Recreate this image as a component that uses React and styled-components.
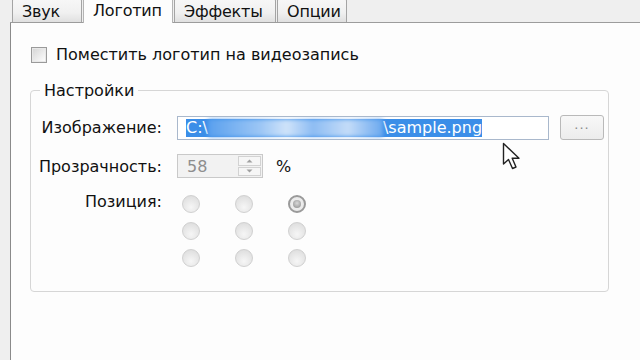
import React from "react";
import styled, { createGlobalStyle, css } from "styled-components";

const GlobalStyle = createGlobalStyle`
  html, body { margin: 0; padding: 0; }
  body {
    background: #efefef;
    font-family: "DejaVu Sans", "Liberation Sans", sans-serif;
    font-size: 16px;
    color: #111111;
  }
`;

const Window = styled.div`
  position: relative;
  width: 640px;
  height: 360px;
  overflow: hidden;
  display: flex;
  flex-direction: column;
  background: #efefef;
`;

const TabRow = styled.div`
  display: flex;
  align-items: flex-end;
  height: 22px;
  margin-left: 10px;
  padding-left: 2px;
  border-bottom: 1px solid #9c9c9c;
  box-sizing: content-box;
`;

const Tab = styled.div`
  height: 24px;
  width: ${(p) => p.$w}px;
  padding: 2px 0 0 9px;
  display: flex;
  align-items: center;
  box-sizing: border-box;
  border: 1px solid #a4a4a4;
  border-bottom: none;
  border-radius: 3px 3px 0 0;
  background: linear-gradient(#f7f7f7, #f0f0f0 60%, #e0e0e0);
  margin-right: 1px;
  white-space: nowrap;
  letter-spacing: -0.2px;
  ${(p) =>
    p.$active &&
    css`
      height: 26px;
      margin-bottom: -1px;
      padding-top: 0;
      background: #fdfdfd;
      border-color: #b4b4b4;
      position: relative;
      z-index: 1;
    `}
`;

const Panel = styled.div`
  flex: 1;
  margin-left: 10px;
  background: #fdfdfd;
  border-left: 1px solid #8a8a8a;
  padding: 23px 0 0 19px;
`;

const CheckRow = styled.label`
  display: flex;
  align-items: center;
  gap: 9px;
  height: 17px;
  padding-left: 1px;
`;

const CheckBox = styled.span`
  width: 16px;
  height: 16px;
  box-sizing: border-box;
  border: 1px solid #9a9a9a;
  background: linear-gradient(135deg, #d4d4d4, #f2f2f2 70%, #ffffff);
  box-shadow: inset 0 0 0 1px #e8e8e8;
`;

const Group = styled.fieldset`
  width: 576px;
  box-sizing: border-box;
  margin: 18px 0 0 0;
  padding: 15px 0 24px 0;
  border: 1px solid #d6d6d6;
  border-radius: 4px;
  display: grid;
  grid-template-columns: 131px 372px 44px;
  column-gap: 15px;
  row-gap: 14px;
  align-items: center;
`;

const Legend = styled.legend`
  margin-left: 9px;
  padding: 0 4px;
`;

const Label = styled.div`
  text-align: right;
  white-space: nowrap;
  ${(p) =>
    p.$top &&
    css`
      align-self: start;
    `}
`;

const TextInput = styled.div`
  height: 24px;
  box-sizing: border-box;
  border: 1px solid #a9b8cc;
  background: #ffffff;
  display: flex;
  align-items: center;
  padding-left: 8px;
  overflow: hidden;
  white-space: nowrap;
`;

const Selection = styled.span`
  background: #3b8ee8;
  color: #ffffff;
  height: 18px;
  display: inline-flex;
  align-items: center;
`;

const Hidden = styled.span`
  display: inline-block;
  width: 175px;
  height: 18px;
  background: linear-gradient(90deg, #5aa0ee, #9cc6f5 30%, #cfe3fa 45%, #8dbcf3 60%, #c4dcf8 80%, #6aa8ef);
  filter: blur(2px);
`;

const BrowseButton = styled.button`
  height: 25px;
  width: 44px;
  margin-left: -4px;
  border: 1px solid #b9b9b9;
  border-radius: 3px;
  background: linear-gradient(#f8f8f8, #ececec);
  color: #8a8a8a;
  font: inherit;
  font-size: 13px;
  letter-spacing: 1px;
  padding: 0 0 6px 0;
`;

const SpinRow = styled.div`
  display: flex;
  align-items: center;
  gap: 13px;
  grid-column: 2 / 4;
`;

const Spin = styled.div`
  width: 86px;
  height: 24px;
  box-sizing: border-box;
  border: 1px solid #c9c9c9;
  background: #f2f2f2;
  display: flex;
  align-items: stretch;
`;

const SpinValue = styled.div`
  flex: 1;
  color: #8e8e8e;
  padding-left: 9px;
  display: flex;
  align-items: center;
`;

const SpinButtons = styled.div`
  width: 25px;
  display: flex;
  flex-direction: column;
  gap: 1px;
  padding: 1px;
  box-sizing: border-box;
`;

const SpinButton = styled.div`
  flex: 1;
  border: 1px solid #d2d2d2;
  background: #f6f6f6;
  display: flex;
  align-items: center;
  justify-content: center;
`;

const Radios = styled.div`
  grid-column: 2 / 4;
  display: grid;
  grid-template-columns: repeat(3, 18px);
  column-gap: 35px;
  row-gap: 9px;
  margin: 3px 0 0 5px;
`;

const Radio = styled.span`
  width: 18px;
  height: 18px;
  box-sizing: border-box;
  border-radius: 50%;
  border: 1px solid #d0d0d0;
  background: radial-gradient(circle at 50% 70%, #f6f6f6, #e2e2e2 70%, #d8d8d8);
  display: flex;
  align-items: center;
  justify-content: center;
  ${(p) =>
    p.$checked &&
    css`
      border: 2px solid #9a9a9a;
      background: radial-gradient(circle, #f4f4f4, #e4e4e4);
    `}
`;

const Dot = styled.span`
  width: 8px;
  height: 8px;
  border-radius: 50%;
  background: radial-gradient(circle at 50% 40%, #d8d8d8, #8a8a8a);
`;

const Cursor = styled.svg`
  position: absolute;
  left: 502px;
  top: 142px;
`;

const Arrow = ({ up }) => (
  <svg width="7" height="4" viewBox="0 0 7 4">
    <path d={up ? "M0.5 3.5 L3.5 0.5 L6.5 3.5 Z" : "M0.5 0.5 L3.5 3.5 L6.5 0.5 Z"} fill="#a0a0a0" />
  </svg>
);

const tabs = [
  { label: "Звук", w: 70 },
  { label: "Логотип", w: 90, active: true },
  { label: "Эффекты", w: 102 },
  { label: "Опции", w: 70 },
];

export default function App() {
  const positions = [false, false, true, false, false, false, false, false, false];
  return (
    <>
      <GlobalStyle />
      <Window>
        <TabRow>
          {tabs.map((t) => (
            <Tab key={t.label} $w={t.w} $active={t.active}>
              {t.label}
            </Tab>
          ))}
        </TabRow>
        <Panel>
          <CheckRow>
            <CheckBox />
            Поместить логотип на видеозапись
          </CheckRow>
          <Group>
            <Legend>Настройки</Legend>
            <Label>Изображение:</Label>
            <TextInput>
              <Selection>
                C:\<Hidden />\sample.png
              </Selection>
            </TextInput>
            <BrowseButton>...</BrowseButton>
            <Label>Прозрачность:</Label>
            <SpinRow>
              <Spin>
                <SpinValue>58</SpinValue>
                <SpinButtons>
                  <SpinButton>
                    <Arrow up />
                  </SpinButton>
                  <SpinButton>
                    <Arrow />
                  </SpinButton>
                </SpinButtons>
              </Spin>
              %
            </SpinRow>
            <Label $top>Позиция:</Label>
            <Radios>
              {positions.map((c, i) => (
                <Radio key={i} $checked={c}>
                  {c && <Dot />}
                </Radio>
              ))}
            </Radios>
          </Group>
        </Panel>
        <Cursor width="24" height="30" viewBox="0 0 24 30">
          <path
            d="M1.5 1.5 L1.5 22 L6.5 17.5 L10.5 26.5 L14 25 L10.2 16.2 L17 16.2 Z"
            fill="#ffffff"
            stroke="#222222"
            strokeWidth="1.4"
            strokeLinejoin="round"
          />
        </Cursor>
      </Window>
    </>
  );
}
